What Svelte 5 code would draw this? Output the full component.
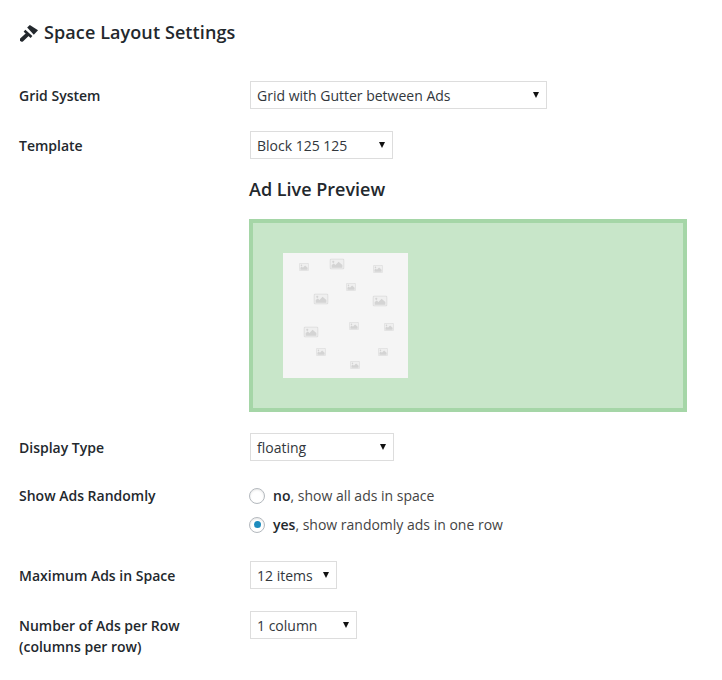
<script>
  // placeholder images scattered in the ad block: centre x/y relative to the block, l = large
  const ads = [
    { x: 21, y: 14 },
    { x: 54, y: 11, l: true },
    { x: 95, y: 16 },
    { x: 68, y: 34 },
    { x: 38, y: 46, l: true },
    { x: 97, y: 48, l: true },
    { x: 28, y: 79, l: true },
    { x: 71, y: 73 },
    { x: 106, y: 74 },
    { x: 38, y: 99 },
    { x: 100, y: 99 },
    { x: 72, y: 112 }
  ];
</script>

<div class="page">
  <h2>
    <svg class="pin" viewBox="0 0 18 18" width="18" height="18">
      <path d="M1.800 15.700 7 10.900" stroke="#23282d" stroke-width="4" stroke-linecap="round" fill="none" />
      <path d="M4.500 6.800 11.500 13" stroke="#23282d" stroke-width="2.600" fill="none" />
      <path d="M7.200 3.600 9.800 1 18 6.300 13.800 10.800z" fill="#23282d" />
    </svg>
    Space Layout Settings
  </h2>

  <div class="row first">
    <div class="label">Grid System</div>
    <div class="select" style="width: 297px">
      <span>Grid with Gutter between Ads</span><i></i>
    </div>
  </div>

  <div class="row">
    <div class="label">Template</div>
    <div class="select" style="width: 143px">
      <span>Block 125 125</span><i></i>
    </div>
  </div>

  <div class="preview-row">
    <h3>Ad Live Preview</h3>
    <div class="preview">
      <div class="ad">
        {#each ads as a}
          <svg class="ph" class:large={a.l} viewBox="0 0 14 10" preserveAspectRatio="none" style="left: {a.x}px; top: {a.y}px">
            <rect x="0.500" y="0.500" width="13" height="9" rx="1" fill="#efefef" stroke="#dcdcdc" />
            <path d="M2 8.500V6l2-1.500L5.500 6 8.500 3 12 6v2.500z" fill="#d4d4d4" />
            <circle cx="3.500" cy="3" r="1" fill="#d4d4d4" />
          </svg>
        {/each}
      </div>
    </div>
  </div>

  <div class="row display">
    <div class="label">Display Type</div>
    <div class="select" style="width: 144px">
      <span>floating</span><i></i>
    </div>
  </div>

  <div class="row random">
    <div class="label">Show Ads Randomly</div>
    <div class="radios">
      <div class="radio"><span class="dot"></span><span><b>no</b>, show all ads in space</span></div>
      <div class="radio"><span class="dot on"></span><span><b>yes</b>, show randomly ads in one row</span></div>
    </div>
  </div>

  <div class="row max">
    <div class="label">Maximum Ads in Space</div>
    <div class="select" style="width: 87px">
      <span>12 items</span><i></i>
    </div>
  </div>

  <div class="row cols">
    <div class="label">Number of Ads per Row<br />(columns per row)</div>
    <div class="select" style="width: 107px">
      <span>1 column</span><i></i>
    </div>
  </div>
</div>

<style>
  :global(body) {
    background: #fff;
    font-family: "Open Sans", sans-serif;
  }
  .page {
    width: 722px;
    height: 680px;
    box-sizing: border-box;
    padding: 21px 0 0 19px;
    font-size: 14px;
    line-height: 21px;
    color: #444;
    overflow: hidden;
  }
  h2 {
    display: flex;
    align-items: center;
    gap: 6px;
    margin: 0;
    font-size: 18px;
    line-height: 23px;
    font-weight: 600;
    letter-spacing: 0.1px;
    color: #23282d;
  }
  .pin {
    flex: none;
    margin-left: 1px;
  }
  .row {
    display: grid;
    grid-template-columns: 231px auto;
    justify-content: start;
    margin-top: 22px;
  }
  .row.first {
    margin-top: 37px;
  }
  .label {
    font-weight: 600;
    color: #23282d;
    padding-top: 4px;
  }
  .select {
    display: flex;
    align-items: center;
    justify-content: space-between;
    box-sizing: border-box;
    height: 28px;
    padding: 0 7px 0 6px;
    border: 1px solid #ddd;
    background: #fff;
    color: #32373c;
  }
  .select i {
    width: 0;
    height: 0;
    border-left: 3.500px solid transparent;
    border-right: 3.500px solid transparent;
    border-top: 6px solid #111;
  }
  .preview-row {
    margin: 19px 0 0 230px;
  }
  h3 {
    margin: 0;
    font-size: 18px;
    line-height: 22px;
    font-weight: 600;
    color: #23282d;
  }
  .preview {
    box-sizing: border-box;
    width: 438px;
    height: 193px;
    margin-top: 19px;
    padding: 30px;
    border: 4px solid #a5d6a7;
    background: #c8e6c9;
  }
  .ad {
    position: relative;
    width: 125px;
    height: 125px;
    background: #f5f5f5;
  }
  .ph {
    position: absolute;
    width: 10px;
    height: 8px;
    transform: translate(-50%, -50%);
    filter: blur(0.300px);
  }
  .ph.large {
    width: 15px;
    height: 11px;
  }
  .row.display {
    margin-top: 21px;
  }
  .row.random {
    margin-top: 20px;
  }
  .radios {
    display: flex;
    flex-direction: column;
    gap: 8px;
    padding-top: 4px;
    margin-left: -1px;
  }
  .radio {
    display: flex;
    align-items: center;
    gap: 8px;
    color: #444;
  }
  .radio b {
    font-weight: 600;
    color: #23282d;
  }
  .dot {
    display: grid;
    place-items: center;
    box-sizing: border-box;
    width: 16px;
    height: 16px;
    border: 1px solid #b4b9be;
    border-radius: 50%;
    background: #fff;
    box-shadow: inset 0 1px 2px rgba(0, 0, 0, 0.1);
  }
  .dot.on::before {
    content: "";
    width: 7px;
    height: 7px;
    border-radius: 50%;
    background: #1e8cbe;
  }
  .row.max {
    margin-top: 26px;
  }
  .row.cols {
    margin-top: 22px;
  }
</style>
